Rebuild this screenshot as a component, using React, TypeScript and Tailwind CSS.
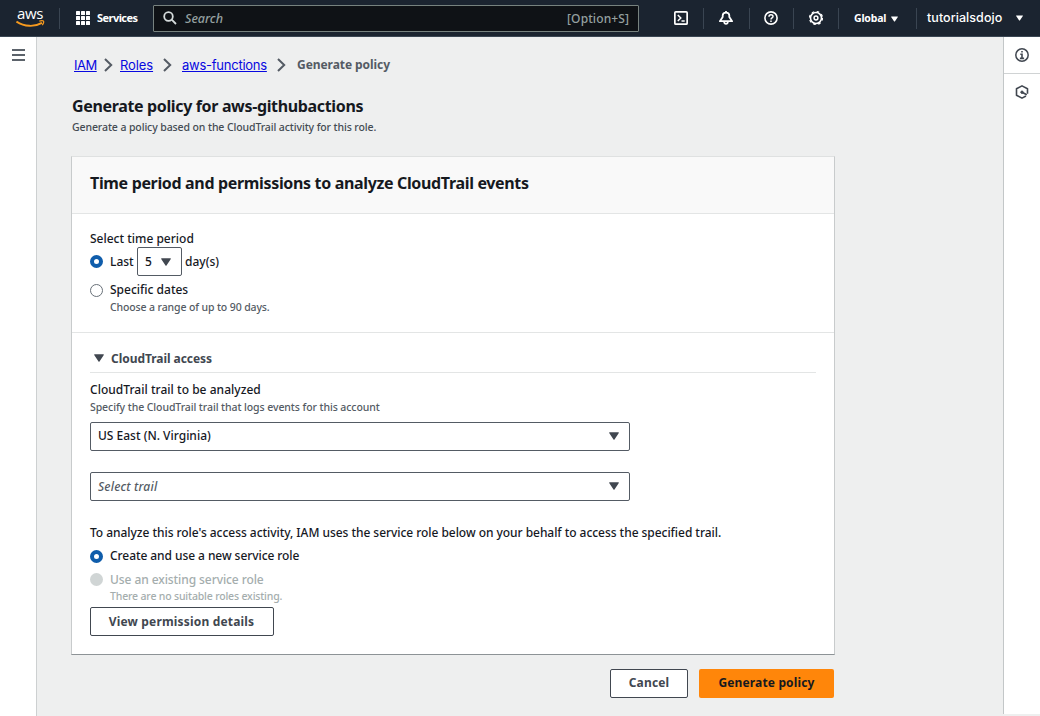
import React from "react";

const Caret = ({ className = "" }: { className?: string }) => (
  <svg viewBox="0 0 10 8" className={className} fill="currentColor">
    <path d="M0.6 0.3h8.8c.4 0 .6.4.4.7L5.5 7.5c-.2.3-.8.3-1 0L.2 1C0 .7.2.3.6.3z" />
  </svg>
);

const Chevron = () => (
  <svg viewBox="0 0 9 14" className="h-[14px] w-[9px] shrink-0" fill="none" stroke="#545b64" strokeWidth="2">
    <path d="M1 1l6.2 6L1 13" />
  </svg>
);

const Divider = () => <div className="h-[21px] w-px shrink-0 bg-[#3a4552]" />;

const AwsLogo = () => (
  <div className="relative h-5 w-[30px] shrink-0">
    <span className="absolute -top-[5px] left-[1px] font-['Open_Sans',sans-serif] text-[15px] leading-[20px] font-medium tracking-[-0.3px] text-white">
      aws
    </span>
    <svg viewBox="0 0 30 9" className="absolute top-[12px] left-0 h-[9px] w-[30px]" fill="none" stroke="#f79a1e">
      <path d="M0.500 1.600C8.500 6.800 18.500 7.200 26 2.900" strokeWidth="1.900" />
      <path d="M23.300 1.100c1.700-.4 3.700-.5 4.200.1.400.7-.2 2.600-1.200 4" strokeWidth="1.300" />
    </svg>
  </div>
);

const Radio = ({ state }: { state: "on" | "off" | "disabled" }) => {
  const look = {
    on: "border-[4px] border-[#0f5dab] bg-white",
    off: "border border-[#687078] bg-white",
    disabled: "bg-[#d0d5d5]",
  }[state];
  return <span className={`block size-[13px] shrink-0 rounded-full ${look}`} />;
};

function TopBar() {
  return (
    <header className="flex h-[37px] shrink-0 items-center border-b border-[#3a4653] bg-[#1b2430] text-white">
      <div className="flex w-[60px] items-center justify-between pl-4">
        <AwsLogo />
        <Divider />
      </div>
      <svg viewBox="0 0 14 14" className="ml-4 size-[14px] shrink-0" fill="white">
        {[0, 5, 10].map((y) => [0, 5, 10].map((x) => <rect key={`${x}${y}`} x={x} y={y} width="4" height="4" rx="0.500" />))}
      </svg>
      <span className="ml-[7px] w-[56px] pt-px text-[11px] font-bold tracking-[-0.550px] whitespace-nowrap">Services</span>
      <div className="flex h-[27px] w-[486px] items-center rounded-[1px] border border-[#77827f] bg-[#0f1216] pr-[9px] pl-[9px] text-[#95a0a0]">
        <svg viewBox="0 0 14 14" className="size-[14px]" fill="none" stroke="#d5dbdb" strokeWidth="1.800">
          <circle cx="5.500" cy="5.500" r="4.300" />
          <path d="M8.700 8.700l4.300 4.300" />
        </svg>
        <span className="ml-[8px] pt-[2px] text-[12.500px] italic">Search</span>
        <span className="ml-auto pt-px text-[12px] tracking-[0.100px]">[Option+S]</span>
      </div>
      <div className="flex h-full w-[65px] items-center justify-between pl-[35px]">
        <svg viewBox="0 0 14 14" className="size-[14px]" fill="none" stroke="white" strokeWidth="1.700">
          <rect x="0.850" y="0.850" width="12.300" height="12.300" rx="1" />
          <path d="M3.800 4l3 3-3 3M7.500 10h3.200" strokeWidth="1.500" />
        </svg>
        <Divider />
      </div>
      <div className="flex h-full w-[46px] items-center justify-between pl-[15px]">
        <svg viewBox="0 0 14 14" className="size-[14px]" fill="none" stroke="white" strokeWidth="1.800">
          <path d="M7 0v1.500M3.700 6V4.600a3.300 3 0 0 1 6.600 0V6l2.800 4.200H.9z" strokeLinejoin="round" />
          <path d="M5.200 11c.2 2.400 3.400 2.400 3.600 0" strokeWidth="1.800" />
        </svg>
        <Divider />
      </div>
      <div className="flex h-full w-[44px] items-center justify-between pl-[14px]">
        <svg viewBox="0 0 14 14" className="size-[14px]" fill="none" stroke="white" strokeWidth="1.600">
          <circle cx="7" cy="7" r="6.100" />
          <path d="M5 5.700c0-2.600 4-2.500 4-.2C9 7 7 6.900 7 8.500M7 9.600v1.500" strokeWidth="1.500" />
        </svg>
        <Divider />
      </div>
      <div className="flex h-full w-[45px] items-center justify-between pl-[15px]">
        <svg viewBox="0 0 14 14" className="size-[14px]" fill="none" stroke="white">
          <circle cx="7" cy="7" r="5.500" strokeWidth="1.600" />
          <circle cx="7" cy="7" r="6.500" strokeWidth="1.200" strokeDasharray="2.500 2.605" />
          <circle cx="7" cy="7" r="1.900" strokeWidth="1.500" />
        </svg>
        <Divider />
      </div>
      <div className="flex h-full w-[78px] items-center pl-[15px]">
        <span className="w-[37px] pt-px text-[10.500px] font-bold tracking-[-0.200px]">Global</span>
        <Caret className="mt-px h-[6px] w-[7px]" />
        <div className="ml-auto">
          <Divider />
        </div>
      </div>
      <span className="ml-[10px] w-[89px] font-[Inter,sans-serif] text-[12.500px] font-medium tracking-[0.060px]">
        tutorialsdojo
      </span>
      <Caret className="h-[6px] w-[7px]" />
    </header>
  );
}

function SelectBox({ children, placeholder = false }: { children: React.ReactNode; placeholder?: boolean }) {
  return (
    <div className="flex h-[29px] w-[540px] items-center justify-between rounded-[2px] border border-[#545b64] bg-white pr-[10px] pl-[7px]">
      <span className={placeholder ? "tracking-[0.200px] text-[#545b64] italic" : "pb-px"}>{children}</span>
      <Caret className="mb-px h-[8px] w-[10px] text-[#414750]" />
    </div>
  );
}

export default function App() {
  return (
    <div className="flex h-[716px] w-[1040px] flex-col overflow-hidden bg-[#eeefef] font-['Noto_Sans',sans-serif] text-[12px] font-medium text-[#16191f]">
      <TopBar />
      <div className="flex min-h-0 flex-1">
        <nav className="w-[37px] shrink-0 border-r border-[#cdd0d1] bg-white pt-[12px] pl-3">
          <div className="flex w-[13px] flex-col gap-[3px]">
            <div className="h-[2px] bg-[#5c636b]" />
            <div className="h-[2px] bg-[#5c636b]" />
            <div className="h-[2px] bg-[#5c636b]" />
          </div>
        </nav>

        <main className="flex-1 pl-[34px]">
          <div className="mt-[18px] flex h-5 items-center pl-[3px] font-[Inter,sans-serif] text-[13px] font-normal tracking-[-0.250px] text-[#0808e0]">
            <a className="w-[30px] pt-[2px] tracking-[-0.500px] underline">IAM</a>
            <Chevron />
            <a className="ml-[7px] w-[43px] pt-[2px] tracking-[-0.100px] underline">Roles</a>
            <Chevron />
            <a className="ml-[10px] w-[95px] pt-[2px] whitespace-nowrap underline">aws-functions</a>
            <Chevron />
            <span className="ml-[11px] font-['Noto_Sans',sans-serif] text-[12px] font-bold tracking-[-0.060px] text-[#545b64]">
              Generate policy
            </span>
          </div>
          <h1 className="mt-5 h-[22px] pl-px text-[16px] leading-[22px] font-bold tracking-[-0.350px]">
            Generate policy for aws-githubactions
          </h1>
          <p className="mt-[2px] h-4 pl-px text-[10.500px] leading-4 tracking-[-0.100px] text-[#444b53]">
            Generate a policy based on the CloudTrail activity for this role.
          </p>

          <section className="mt-[21px] h-[499px] w-[764px] border border-t-[#dfe1e1] border-r-[#c8cbcc] border-b-[#8d9396] border-l-[#c8cbcc] bg-white">
            <div className="flex h-[57px] items-center border-b border-[#e3e5e5] bg-[#f9f9f9] pb-[5px] pl-[18px]">
              <h2 className="text-[16px] font-bold tracking-[-0.340px]">
                Time period and permissions to analyze CloudTrail events
              </h2>
            </div>
            <div className="h-[119px] border-b border-[#e3e5e5] pt-[15px] pl-[18px]">
              <div className="h-[18px] leading-[20px]">Select time period</div>
              <div className="flex h-[29px] items-center">
                <Radio state="on" />
                <span className="ml-[7px] w-[27px]">Last</span>
                <div className="flex h-[29px] w-[45px] items-center rounded-[2px] border border-[#545b64] pl-[7px]">
                  <span className="w-[16px]">5</span>
                  <Caret className="h-[8px] w-[10px] text-[#414750]" />
                </div>
                <span className="ml-[3px]">day(s)</span>
              </div>
              <div className="mt-[5px] flex h-[18px] items-center gap-[7px]">
                <Radio state="off" />
                <span>Specific dates</span>
              </div>
              <p className="h-4 pl-5 text-[10.500px] leading-4 tracking-[-0.120px] text-[#545b64]">
                Choose a range of up to 90 days.
              </p>
            </div>
            <div className="px-[18px] pt-[16px]">
              <div className="flex h-[24px] items-start border-b border-[#e3e5e5] leading-[20px] font-bold tracking-[-0.050px] text-[#414750]">
                <Caret className="mt-[5px] mr-[7px] ml-[4px] h-[8px] w-[10px]" />
                <span>CloudTrail access</span>
              </div>
              <div className="mt-2 h-[18px] leading-[18px] tracking-[0.030px]">CloudTrail trail to be analyzed</div>
              <p className="mb-[7px] h-4 text-[10.500px] leading-4 tracking-[-0.080px] text-[#545b64]">
                Specify the CloudTrail trail that logs events for this account
              </p>
              <div className="flex flex-col gap-[21px]">
                <SelectBox>US East (N. Virginia)</SelectBox>
                <SelectBox placeholder>Select trail</SelectBox>
              </div>
              <p className="mt-[23px] h-[18px] leading-[18px] tracking-[-0.045px] whitespace-nowrap">
                To analyze this role's access activity, IAM uses the service role below on your behalf to access the specified trail.
              </p>
              <div className="mt-[5px] flex h-[18px] items-center gap-[7px] tracking-[-0.070px]">
                <Radio state="on" />
                <span>Create and use a new service role</span>
              </div>
              <div className="mt-[6px] flex h-[18px] items-center gap-[7px] tracking-[-0.080px] text-[#a4adad]">
                <div className="pb-px">
                  <Radio state="disabled" />
                </div>
                <span>Use an existing service role</span>
              </div>
              <p className="h-4 pl-5 text-[10.500px] leading-[15px] tracking-[-0.170px] text-[#a4adad]">
                There are no suitable roles existing.
              </p>
              <button className="mt-[2px] block h-[29px] w-[184px] rounded-[2px] border border-[#414750] pr-px font-bold tracking-[0.170px] text-[#414750]">
                View permission details
              </button>
            </div>
          </section>

          <div className="mt-[14px] flex w-[763px] justify-end gap-[11px] font-bold tracking-[0.150px]">
            <button className="h-[29px] w-[78px] rounded-[2px] border border-[#414750] bg-white pb-px text-[#414750]">
              Cancel
            </button>
            <button className="h-[29px] w-[135px] rounded-[2px] bg-[#ff860a] pb-px text-[#16191f]">Generate policy</button>
          </div>
        </main>

        <aside className="mb-[2px] w-[37px] shrink-0 border-l border-[#c3c7c8] bg-white text-[#414750]">
          <div className="flex h-[37px] items-center justify-center border-b border-[#d0d3d4]">
            <svg viewBox="0 0 14 14" className="size-[14px]" fill="none" stroke="currentColor">
              <circle cx="7" cy="7" r="6.200" strokeWidth="1.500" />
              <path d="M7 2.900v1.700M5.300 6.200H7v4M4.900 10.400h4.200" strokeWidth="1.600" />
            </svg>
          </div>
          <div className="flex h-[36px] items-center justify-center">
            <svg viewBox="0 0 14 14" className="size-[14px]" fill="none" stroke="currentColor" strokeWidth="1.600">
              <path d="M12.500 8.800V3.800L7 .9 1.500 3.800v6.400L7 13.100l4-2.100" strokeLinejoin="round" />
              <path d="M7 7.200l4.800 2.500" strokeWidth="1.700" />
              <circle cx="7" cy="7.200" r="1.200" fill="currentColor" strokeWidth="1" />
            </svg>
          </div>
        </aside>
      </div>
    </div>
  );
}
